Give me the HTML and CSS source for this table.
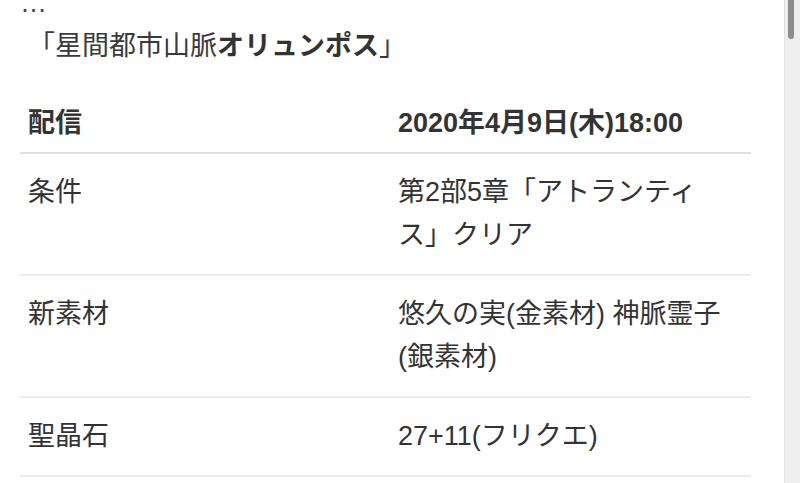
FILE: index.html
```html
<!DOCTYPE html>
<html lang="ja">
<head>
<meta charset="utf-8">
<title>オリュンポス</title>
<link rel="stylesheet" href="styles.css">
</head>
<body>
<div class="viewport">
  <main class="page">
    <div class="scrolled">
      <p class="ellipsis">…</p>
      <p class="title">「星間都市山脈<strong>オリュンポス</strong>」</p>
      <table class="info">
        <colgroup><col class="col-label"><col></colgroup>
        <thead>
          <tr><th>配信</th><th>2020年4月9日(木)18:00</th></tr>
        </thead>
        <tbody>
          <tr><td>条件</td><td>第2部5章「アトランティス」クリア</td></tr>
          <tr><td>新素材</td><td>悠久の実(金素材) 神脈霊子(銀素材)</td></tr>
          <tr><td>聖晶石</td><td>27+11(フリクエ)</td></tr>
        </tbody>
      </table>
    </div>
  </main>
  <aside class="scrollbar"><div class="thumb"></div></aside>
</div>
</body>
</html>
```

FILE: styles.css
```css
html, body {
  margin: 0;
  padding: 0;
  height: 100%;
  overflow: hidden;
  background: #ffffff;
}

body {
  font-family: "Liberation Sans", "Noto Sans CJK JP", sans-serif;
  font-size: 27px;
  line-height: 43px;
  color: #333333;
}

.viewport {
  display: flex;
  height: 100%;
}

.page {
  flex: 1;
  overflow: hidden;
  padding: 0 33px 0 20px;
}

.scrolled {
  margin-top: -18px;
}

.ellipsis {
  margin: 0;
  color: #444444;
}

.title {
  margin: 0 0 18px;
  padding-left: 8px;
  color: #3a3a3a;
}

.title strong {
  font-weight: 700;
  color: #333333;
}

.info {
  width: 731px;
  border-collapse: collapse;
  table-layout: fixed;
}

.col-label {
  width: 370px;
}

.info th {
  text-align: left;
  font-weight: 700;
  padding: 16px 8px 7px;
  border-bottom: 2px solid #dedede;
  vertical-align: top;
}

.info td {
  padding: 17px 22px 17px 8px;
  border-bottom: 2px solid #ececec;
  vertical-align: top;
}

.scrollbar {
  width: 15px;
  flex: 0 0 15px;
  background: #eeeeee;
  border-left: 1px solid #e2e2e2;
  position: relative;
}

.thumb {
  position: absolute;
  top: 0;
  left: 3px;
  width: 6px;
  height: 39px;
  background: #8c8c8c;
  border-radius: 0 0 3px 3px;
}
```
